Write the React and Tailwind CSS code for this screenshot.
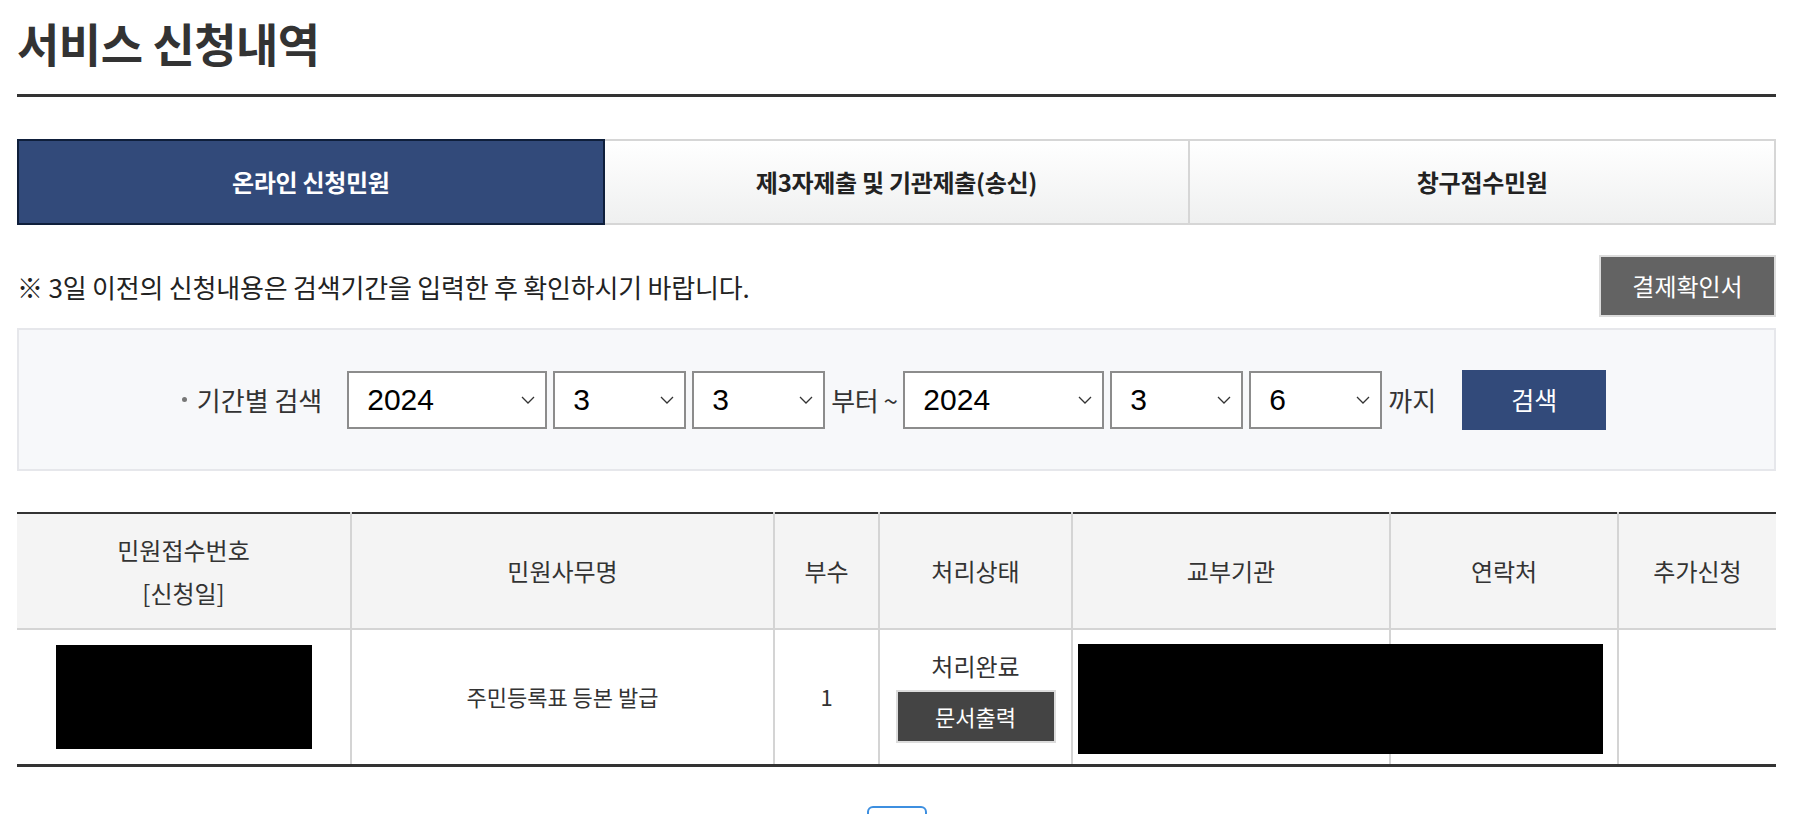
import { useState } from "react";

const years = ["2022", "2023", "2024"];
const months = Array.from({ length: 12 }, (_, i) => String(i + 1));
const days = Array.from({ length: 31 }, (_, i) => String(i + 1));

function Chevron() {
  return (
    <svg className="pointer-events-none absolute right-[12px] top-1/2 -translate-y-1/2" width="14" height="9" viewBox="0 0 14 9">
      <path d="M1 1.5 L7 7.5 L13 1.5" fill="none" stroke="#333" strokeWidth="1.3" />
    </svg>
  );
}

function DateSelect({ value, onChange, options, width }) {
  return (
    <div className={`relative h-[58px] ${width}`}>
      <select
        value={value}
        onChange={(e) => onChange(e.target.value)}
        className="h-full w-full appearance-none border-2 border-[#8c8c8c] bg-white pl-[18px] font-['Liberation_Sans',Arial,sans-serif] text-[30px] text-black outline-none"
      >
        {options.map((o) => (
          <option key={o} value={o}>
            {o}
          </option>
        ))}
      </select>
      <Chevron />
    </div>
  );
}

const tabs = ["온라인 신청민원", "제3자제출 및 기관제출(송신)", "창구접수민원"];

export default function App() {
  const [active, setActive] = useState(0);
  const [from, setFrom] = useState({ y: "2024", m: "3", d: "3" });
  const [to, setTo] = useState({ y: "2024", m: "3", d: "6" });

  return (
    <div className="min-h-[814px] bg-white font-['Noto_Sans_CJK_KR','Noto_Sans',sans-serif] text-[#333]">
      <div className="ml-[17px] w-[1759px]">
        <h2 className="pt-[17px] text-[46px] font-bold leading-[51px] tracking-[-0.5px] text-[#333]">서비스 신청내역</h2>
        <div className="mt-[26px] h-[3px] bg-[#333]" />

        <div className="mt-[42px] flex h-[86px]">
          {tabs.map((t, i) => (
            <button
              key={t}
              onClick={() => setActive(i)}
              className={
                i === active
                  ? "flex flex-1 items-center justify-center border-2 border-[#0f1f3b] bg-[#324a7a] text-[24px] font-bold tracking-[-0.3px] text-white"
                  : "flex flex-1 items-center justify-center border-2 border-l-0 border-[#d6d6d6] bg-gradient-to-b from-white to-[#eff0f0] text-[24px] font-bold tracking-[-0.3px] text-[#222]"
              }
            >
              {t}
            </button>
          ))}
        </div>

        <div className="mt-[30px] flex h-[62px] items-center justify-between">
          <p className="text-[26px] tracking-[-0.2px] text-[#222]">※ 3일 이전의 신청내용은 검색기간을 입력한 후 확인하시기 바랍니다.</p>
          <button className="h-[62px] w-[177px] border-2 border-[#dcdcdc] bg-[#636363] text-[24px] text-white">결제확인서</button>
        </div>

        <div className="mt-[11px] flex h-[143px] items-center justify-center border-2 border-[#e6e7eb] bg-[#f7f8fa] pr-[5px]">
          <div className="flex items-center">
            <span className="mr-[25px] flex items-center text-[26px] text-[#333]">
              <span className="mr-[10px] inline-block h-[5px] w-[5px] rounded-full bg-[#777]" />
              기간별 검색
            </span>
            <div className="flex items-center gap-[6px]">
              <DateSelect value={from.y} onChange={(v) => setFrom({ ...from, y: v })} options={years} width="w-[200px]" />
              <DateSelect value={from.m} onChange={(v) => setFrom({ ...from, m: v })} options={months} width="w-[133px]" />
              <DateSelect value={from.d} onChange={(v) => setFrom({ ...from, d: v })} options={days} width="w-[133px]" />
            </div>
            <span className="mx-[6px] text-[26px] tracking-[-0.5px] text-[#333]">부터 ~</span>
            <div className="flex items-center gap-[6px]">
              <DateSelect value={to.y} onChange={(v) => setTo({ ...to, y: v })} options={years} width="w-[201px]" />
              <DateSelect value={to.m} onChange={(v) => setTo({ ...to, m: v })} options={months} width="w-[133px]" />
              <DateSelect value={to.d} onChange={(v) => setTo({ ...to, d: v })} options={days} width="w-[133px]" />
            </div>
            <span className="ml-[6px] text-[26px] text-[#333]">까지</span>
            <button className="ml-[26px] h-[60px] w-[144px] bg-[#324a7a] text-[25px] text-white">검색</button>
          </div>
        </div>

        <table className="mt-[41px] w-full table-fixed border-collapse text-[24px] text-[#333]">
          <colgroup>
            <col className="w-[334px]" />
            <col className="w-[423px]" />
            <col className="w-[105px]" />
            <col className="w-[193px]" />
            <col className="w-[318px]" />
            <col className="w-[228px]" />
            <col className="w-[158px]" />
          </colgroup>
          <thead>
            <tr className="h-[116px] border-t-2 border-b-2 border-t-[#333] border-b-[#d4d4d4] bg-[#f4f4f4]">
              <th className="border-r-2 border-[#d4d4d4] font-normal leading-[43px]">
                민원접수번호
                <br />
                [신청일]
              </th>
              <th className="border-r-2 border-[#d4d4d4] font-normal">민원사무명</th>
              <th className="border-r-2 border-[#d4d4d4] font-normal">부수</th>
              <th className="border-r-2 border-[#d4d4d4] font-normal">처리상태</th>
              <th className="border-r-2 border-[#d4d4d4] font-normal">교부기관</th>
              <th className="border-r-2 border-[#d4d4d4] font-normal">연락처</th>
              <th className="font-normal">추가신청</th>
            </tr>
          </thead>
          <tbody>
            <tr className="h-[136px] border-b-[3px] border-[#333] text-center">
              <td className="border-r-2 border-[#d4d4d4]">
                <div className="mx-auto h-[104px] w-[256px] bg-black" />
              </td>
              <td className="border-r-2 border-[#d4d4d4] text-[22px]">주민등록표 등본 발급</td>
              <td className="border-r-2 border-[#d4d4d4] text-[22px]">1</td>
              <td className="border-r-2 border-[#d4d4d4]">
                <div className="flex flex-col items-center">
                  <span className="leading-[30px]">처리완료</span>
                  <button className="mt-[9px] h-[53px] w-[160px] border-2 border-[#dcdcdc] bg-[#444] text-[22px] text-white">문서출력</button>
                </div>
              </td>
              <td className="relative border-r-2 border-[#d4d4d4]">
                <div className="absolute left-[5px] top-[14px] z-10 h-[110px] w-[525px] bg-black" />
              </td>
              <td className="border-r-2 border-[#d4d4d4]" />
              <td />
            </tr>
          </tbody>
        </table>

        <div className="mt-[39px] flex justify-center">
          <button className="h-[50px] w-[60px] rounded-[6px] border-2 border-[#3d8fe0] bg-white text-[22px] text-[#3d8fe0]">1</button>
        </div>
      </div>
    </div>
  );
}
